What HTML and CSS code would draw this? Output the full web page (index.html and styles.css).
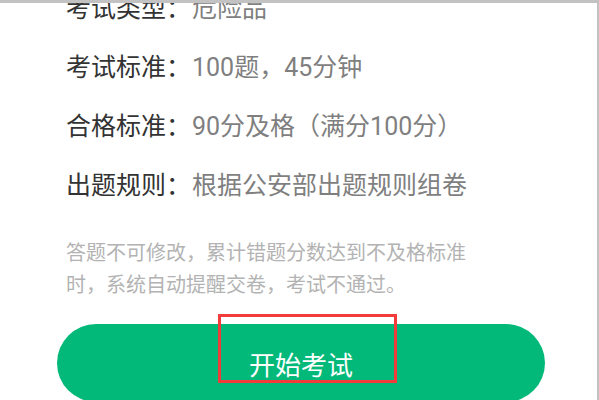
FILE: index.html
```html
<!DOCTYPE html>
<html lang="zh-CN">
<head>
<meta charset="utf-8">
<title>考试说明</title>
<link rel="stylesheet" href="styles.css">
</head>
<body>
<div class="frame">
  <div class="content">
    <div class="row"><span class="label">考试类型：</span><span class="value">危险品</span></div>
    <div class="row"><span class="label">考试标准：</span><span class="value">100题，45分钟</span></div>
    <div class="row"><span class="label">合格标准：</span><span class="value">90分及格（满分100分）</span></div>
    <div class="row"><span class="label">出题规则：</span><span class="value">根据公安部出题规则组卷</span></div>
    <p class="note">答题不可修改，累计错题分数达到不及格标准<br>时，系统自动提醒交卷，考试不通过。</p>
    <div class="btn-wrap">
      <button class="start-btn">开始考试</button>
      <div class="highlight"></div>
    </div>
  </div>
</div>
</body>
</html>
```
FILE: styles.css
```css
html, body {
  margin: 0;
  padding: 0;
  background: #ffffff;
}
.frame {
  width: 599px;
  height: 400px;
  box-sizing: border-box;
  border-top: 3px solid #c2c2c2;
  border-right: 2px solid #c2c2c2;
  overflow: hidden;
  font-family: Roboto, "Noto Sans CJK SC", sans-serif;
}
.content {
  margin-top: -24.5px;
}
.row {
  padding-left: 66px;
  height: 59px;
  line-height: 59px;
  font-size: 25px;
  white-space: nowrap;
}
.label {
  color: #333333;
  margin-right: 1px;
}
.value {
  color: #7f7f7f;
}
.note {
  margin: 22.5px 0 0 66px;
  font-size: 20px;
  line-height: 32px;
  color: #b3b3b3;
}
.btn-wrap {
  position: relative;
  margin-top: 23px;
  padding-left: 57px;
}
.start-btn {
  display: block;
  width: 488px;
  height: 78px;
  border: none;
  border-radius: 39px;
  background: #02b97a;
  color: #ffffff;
  font-family: Roboto, "Noto Sans CJK SC", sans-serif;
  font-size: 26px;
  padding: 0;
}
.highlight {
  position: absolute;
  left: 218px;
  top: -10px;
  width: 179px;
  height: 69px;
  box-sizing: border-box;
  border: 3px solid #f23c3c;
}
```
